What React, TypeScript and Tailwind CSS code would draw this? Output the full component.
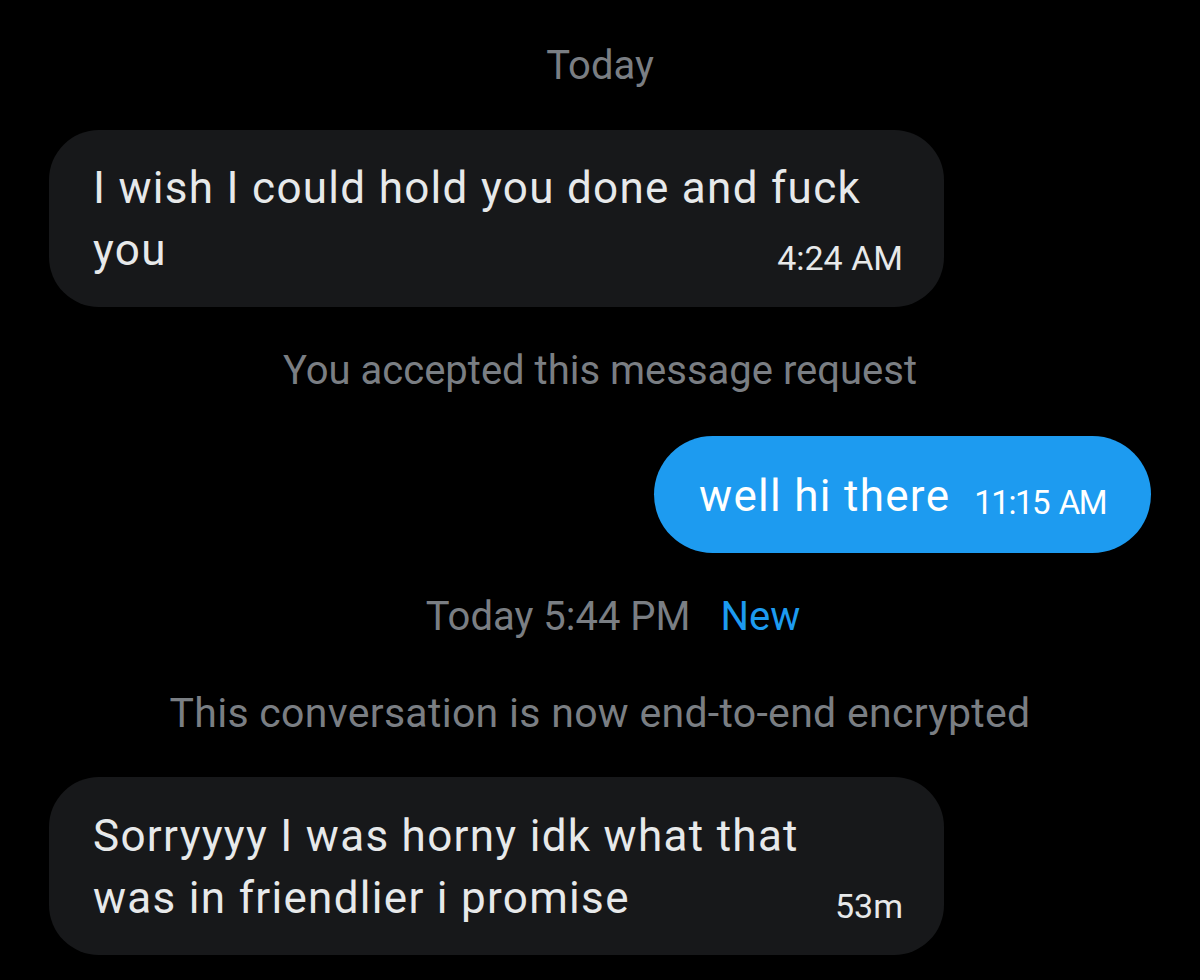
import React from "react";

function IncomingBubble({ lines, last, time, pt }: { lines: string[]; last: string; time: string; pt: string }) {
  return (
    <div className={`w-[895px] rounded-[50px] bg-[#17181a] pl-[44px] pr-[41px] pb-[26px] text-[#e7e9ea] text-[44px] leading-[62px] tracking-[1.3px] ${pt}`}>
      {lines.map((l) => (
        <div key={l} className="whitespace-nowrap">{l}</div>
      ))}
      <div className="flex items-baseline justify-between whitespace-nowrap">
        <span>{last}</span>
        <span className="text-[34px] leading-[40px] tracking-normal translate-y-[5px]">{time}</span>
      </div>
    </div>
  );
}

export default function App() {
  return (
    <div className="w-[1200px] h-[980px] overflow-hidden bg-black px-[49px] flex flex-col font-['Roboto',sans-serif]">
      <div className="pt-[42px] text-center text-[40px] leading-[48px] text-[#7a7e83]">Today</div>

      <div className="mt-[40px]">
        <IncomingBubble pt="pt-[27px]" lines={["I wish I could hold you done and fuck"]} last="you" time="4:24 AM" />
      </div>

      <div className="mt-[40px] text-center text-[40px] leading-[48px] text-[#7a7e83]">
        You accepted this message request
      </div>

      <div className="mt-[41px] self-end flex items-baseline gap-[24px] rounded-full bg-[#1d9bf0] pl-[45px] pr-[45px] pt-[29px] pb-[26px] text-white">
        <span className="text-[44px] leading-[62px] tracking-[1.3px]">well hi there</span>
        <span className="text-[33px] leading-[40px] tracking-[-1.5px] [word-spacing:3px] translate-y-[3px]">11:15 AM</span>
      </div>

      <div className="mt-[40px] flex justify-center gap-[30px] pl-[26px] text-[40px] leading-[48px]">
        <span className="text-[#7a7e83]">Today 5:44 PM</span>
        <span className="text-[#1d9bf0]">New</span>
      </div>

      <div className="mt-[48px] text-center text-[41px] leading-[48px] tracking-[0.3px] text-[#7a7e83]">
        This conversation is now end-to-end encrypted
      </div>

      <div className="mt-[40px]">
        <IncomingBubble
          pt="pt-[28px]"
          lines={["Sorryyyy I was horny idk what that"]}
          last="was in friendlier i promise"
          time="53m"
        />
      </div>
    </div>
  );
}
